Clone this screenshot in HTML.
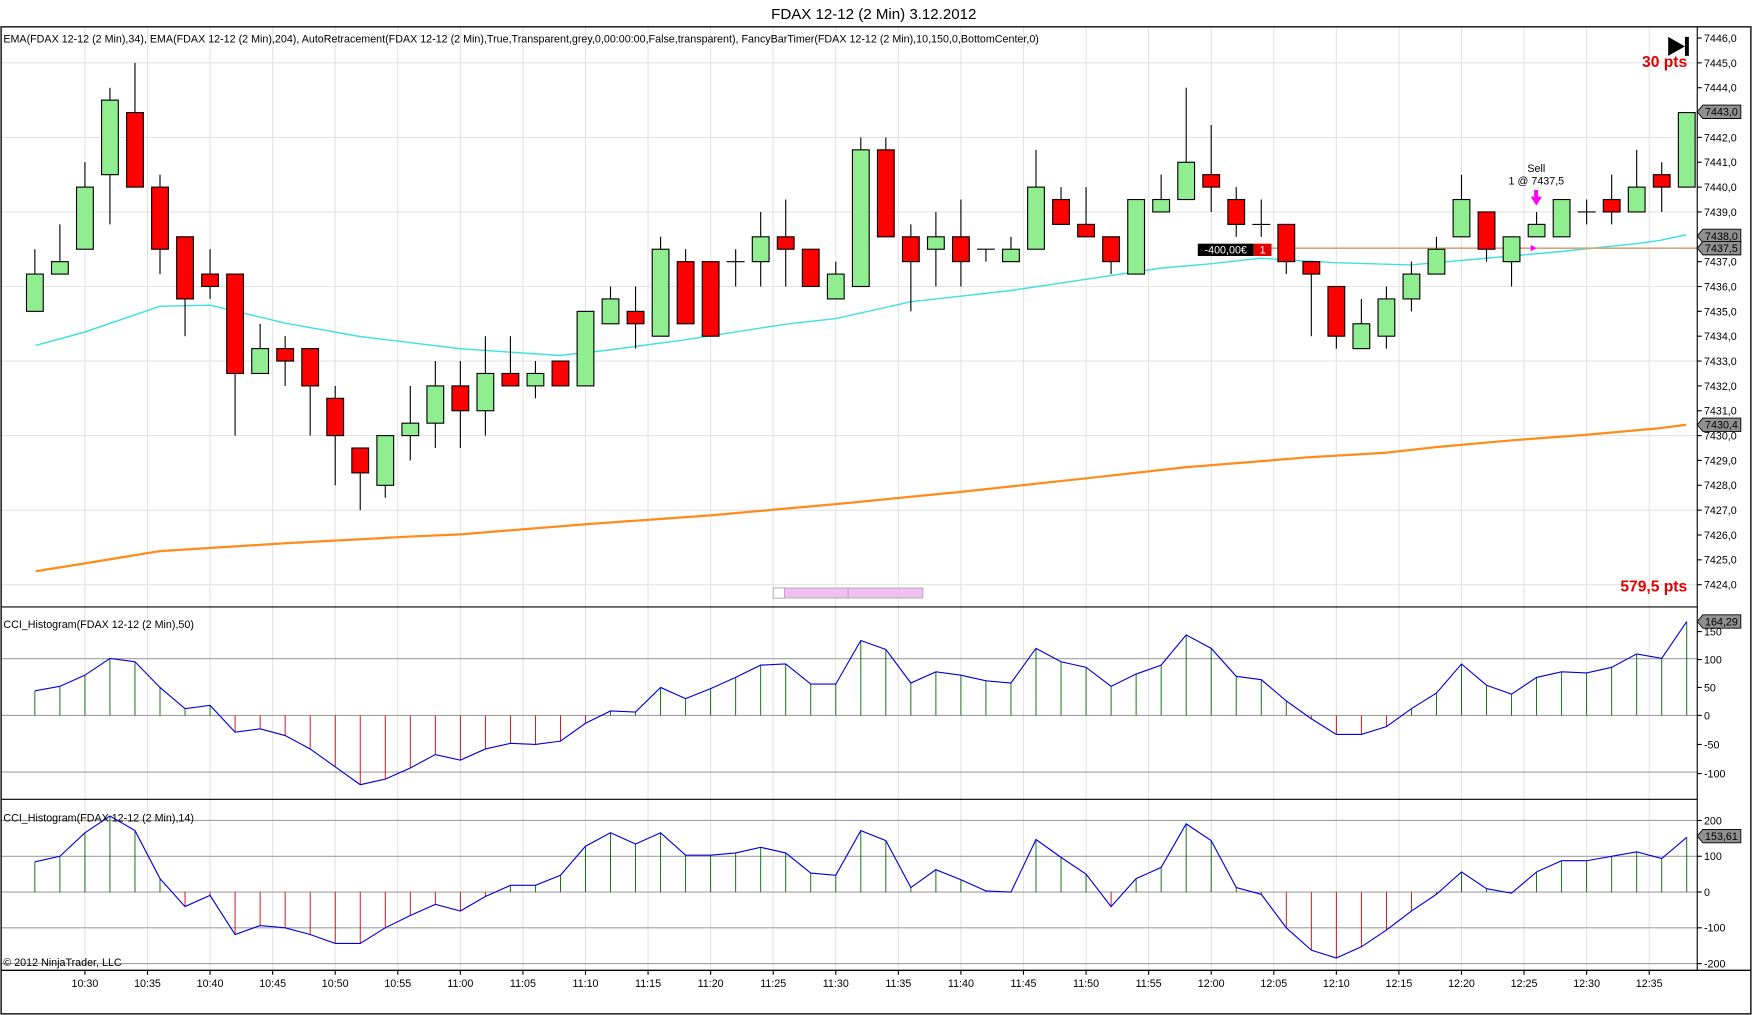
<!DOCTYPE html>
<html><head><meta charset="utf-8"><style>
html,body{margin:0;padding:0;background:#fff;}
svg{display:block;font-family:"Liberation Sans",Arial,sans-serif;}
</style></head><body>
<svg id="s" width="1752" height="1015" viewBox="0 0 1568 908" preserveAspectRatio="none" xmlns="http://www.w3.org/2000/svg">
<rect x="0" y="0" width="1568" height="908" fill="#fff"/>
<text x="782" y="17" font-size="13.5" text-anchor="middle" fill="#000">FDAX 12-12 (2 Min)  3.12.2012</text>
<g id="grid"></g>
<g id="content"></g>
<rect x="1" y="24" width="1566" height="883" fill="none" stroke="#000" stroke-width="1.2"/>
<line x1="1" y1="543" x2="1519" y2="543" stroke="#000"/>
<line x1="1" y1="715" x2="1519" y2="715" stroke="#000"/>
<line x1="1" y1="868" x2="1567" y2="868" stroke="#000" stroke-width="1.2"/>
<line x1="1519" y1="24" x2="1519" y2="868" stroke="#000"/>
<text x="3" y="38" font-size="9.6" fill="#000">EMA(FDAX 12-12 (2 Min),34), EMA(FDAX 12-12 (2 Min),204), AutoRetracement(FDAX 12-12 (2 Min),True,Transparent,grey,0,00:00:00,False,transparent), FancyBarTimer(FDAX 12-12 (2 Min),10,150,0,BottomCenter,0)</text>
<text x="3" y="562" font-size="9.6" fill="#000">CCI_Histogram(FDAX 12-12 (2 Min),50)</text>
<text x="3" y="735" font-size="9.6" fill="#000">CCI_Histogram(FDAX 12-12 (2 Min),14)</text>
<text x="3" y="864" font-size="9.6" fill="#000">© 2012 NinjaTrader, LLC</text>
<text x="1510" y="60" font-size="14" font-weight="bold" fill="#e00000" text-anchor="end">30 pts</text>
<text x="1510" y="529" font-size="14" font-weight="bold" fill="#e00000" text-anchor="end">579,5 pts</text>
<polygon points="1493,33 1493,50 1508,41.5" fill="#000"/>
<rect x="1508" y="33" width="3.5" height="17" fill="#000"/>
<rect x="692" y="526" width="134" height="9" fill="#f0c0f0" stroke="#999" stroke-width="0.6"/>
<rect x="692" y="526" width="10" height="9" fill="#fff" stroke="#999" stroke-width="0.6"/>
<line x1="759" y1="526" x2="759" y2="535" stroke="#999" stroke-width="0.6"/>
<text x="1375" y="154" font-size="9.6" text-anchor="middle">Sell</text>
<text x="1375" y="165" font-size="9.6" text-anchor="middle">1 @ 7437,5</text>
<rect x="1373" y="170" width="3.5" height="7" fill="#ff00ff"/>
<polygon points="1370,176 1380,176 1375,184" fill="#ff00ff"/>
<polygon points="1370,219 1375,222 1370,225" fill="#ff00ff"/>
<rect x="1072" y="218" width="50" height="11" fill="#000"/>
<text x="1097" y="227" font-size="9.6" fill="#fff" text-anchor="middle">-400,00€</text>
<rect x="1122" y="218" width="16" height="11" fill="#e00000"/>
<text x="1130" y="227" font-size="9.6" fill="#fff" text-anchor="middle">1</text>
<g id="axis" font-size="9.6"></g>
</svg>
<script>
var NS="http://www.w3.org/2000/svg";
function el(p,t,a,txt){var e=document.createElementNS(NS,t);for(var k in a)e.setAttribute(k,a[k]);if(txt!=null)e.textContent=txt;p.appendChild(e);return e;}
var G=document.getElementById('grid'),C=document.getElementById('content'),A=document.getElementById('axis');
function py(p){return 34+(7446-p)*22.23;}
var labels=["10:30","10:35","10:40","10:45","10:50","10:55","11:00","11:05","11:10","11:15","11:20","11:25","11:30","11:35","11:40","11:45","11:50","11:55","12:00","12:05","12:10","12:15","12:20","12:25","12:30","12:35"];
labels.forEach(function(l,i){var x=76+56*i;el(G,'line',{x1:x,y1:24,x2:x,y2:868,stroke:'#e4e4e4'});el(A,'line',{x1:x,y1:868,x2:x,y2:872,stroke:'#000'});el(A,'text',{x:x,y:883,'text-anchor':'middle'},l);});
for(var p=7424;p<=7445;p+=3)el(G,'line',{x1:1,y1:py(p),x2:1519,y2:py(p),stroke:'#e4e4e4'});
[100,0,-100].forEach(function(v){var y=640-v*0.507;el(G,'line',{x1:1,y1:y,x2:1519,y2:y,stroke:'#a0a0a0'});});
[200,100,0,-100,-200].forEach(function(v){var y=798-v*0.32;el(G,'line',{x1:1,y1:y,x2:1519,y2:y,stroke:'#a0a0a0'});});
// price axis
for(var p=7424;p<=7446;p++){var y=py(p);el(A,'line',{x1:1519,y1:y,x2:1523,y2:y,stroke:'#000'});el(A,'text',{x:1525,y:y+3.5},p+',0');}
[[150,565],[100,590],[50,615],[0,640],[-50,666],[-100,692]].forEach(function(a){el(A,'line',{x1:1519,y1:a[1],x2:1523,y2:a[1],stroke:'#000'});el(A,'text',{x:1525,y:a[1]+3.5},(a[0]<0?'-':'')+Math.abs(a[0]));});
[[200,734],[100,766],[0,798],[-100,830],[-200,862]].forEach(function(a){el(A,'line',{x1:1519,y1:a[1],x2:1523,y2:a[1],stroke:'#000'});el(A,'text',{x:1525,y:a[1]+3.5},(a[0]<0?'-':'')+Math.abs(a[0]));});
var cnd=[[7435,7436.5,7437.5,7435],[7436.5,7437,7438.5,7436.5],[7437.5,7440,7441,7437.5],[7440.5,7443.5,7444,7438.5],[7443,7440,7445,7440],[7440,7437.5,7440.5,7436.5],[7438,7435.5,7438,7434],[7436.5,7436,7437.5,7435.5],[7436.5,7432.5,7436.5,7430],[7432.5,7433.5,7434.5,7432.5],[7433.5,7433,7434,7432],[7433.5,7432,7433.5,7430],[7431.5,7430,7432,7428],[7429.5,7428.5,7429.5,7427],[7428,7430,7430,7427.5],[7430,7430.5,7432,7429],[7430.5,7432,7433,7429.5],[7432,7431,7433,7429.5],[7431,7432.5,7434,7430],[7432.5,7432,7434,7432],[7432,7432.5,7433,7431.5],[7433,7432,7433,7432],[7432,7435,7435,7432],[7434.5,7435.5,7436,7434.5],[7435,7434.5,7436,7433.5],[7434,7437.5,7438,7434],[7437,7434.5,7437.5,7434.5],[7437,7434,7437,7434],[7437,7437,7437.5,7436],[7437,7438,7439,7436],[7438,7437.5,7439.5,7436],[7437.5,7436,7437.5,7436],[7435.5,7436.5,7437,7435.5],[7436,7441.5,7442,7436],[7441.5,7438,7442,7438],[7438,7437,7438.5,7435],[7437.5,7438,7439,7436],[7438,7437,7439.5,7436],[7437.5,7437.5,7437.5,7437],[7437,7437.5,7438,7437],[7437.5,7440,7441.5,7437.5],[7439.5,7438.5,7440,7438.5],[7438.5,7438,7440,7438],[7438,7437,7438,7436.5],[7436.5,7439.5,7439.5,7436.5],[7439,7439.5,7440.5,7439],[7439.5,7441,7444,7439.5],[7440.5,7440,7442.5,7439],[7439.5,7438.5,7440,7438],[7438.5,7438.5,7439.5,7438],[7438.5,7437,7438.5,7436.5],[7437,7436.5,7437,7434],[7436,7434,7436,7433.5],[7433.5,7434.5,7435.5,7433.5],[7434,7435.5,7436,7433.5],[7435.5,7436.5,7437,7435],[7436.5,7437.5,7438,7436.5],[7438,7439.5,7440.5,7438],[7439,7437.5,7439,7437],[7437,7438,7438,7436],[7438,7438.5,7439,7438],[7438,7439.5,7439.5,7438],[7439,7439,7439.5,7438.5],[7439.5,7439,7440.5,7438.5],[7439,7440,7441.5,7439],[7440.5,7440,7441,7439],[7440,7443,7443,7440]];
function bx(i){return 31.2+22.4*i;}
// EMA lines
el(C,'polyline',{points:"32,309 76,297 143,274 188,273 255,289 322,301 412,312 501,318 546,313 613,304 703,290 748,285 815,270 904,260 971,250 1038,240 1083,236 1128,231 1195,235 1262,237 1330,231 1397,225 1464,218 1486,215 1509,210",fill:'none',stroke:'#40e0e0','stroke-width':1.3});
el(C,'polyline',{points:"32,511 76,504 143,493 255,486 367,480 412,478 524,469 636,461 748,451 860,440 971,428 1061,418 1172,409 1240,405 1285,400 1352,394 1419,389 1486,383 1509,380",fill:'none',stroke:'#ff8c1a','stroke-width':2});
el(C,'line',{x1:1138,y1:222,x2:1519,y2:222,stroke:'#d2a679','stroke-width':1.5});
cnd.forEach(function(c,i){var x=bx(i),o=c[0],cl=c[1],h=c[2],l=c[3];
el(C,'line',{x1:x,y1:py(h),x2:x,y2:py(l),stroke:'#000'});
if(o==cl){el(C,'line',{x1:x-8,y1:py(o),x2:x+8,y2:py(o),stroke:'#000'});}
else{var t=Math.max(o,cl),b=Math.min(o,cl);el(C,'rect',{x:x-7.5,y:py(t),width:15,height:py(b)-py(t),fill:cl>o?'#90ee90':'#ff0000',stroke:'#000','stroke-width':1});}});
function hist(v,zero){var pts=[];v.forEach(function(y,i){var x=bx(i);pts.push(x+','+y);el(C,'line',{x1:x,y1:zero,x2:x,y2:y,stroke:y>zero?'#cc0000':'#006400','stroke-width':0.8});});el(C,'polyline',{points:pts.join(' '),fill:'none',stroke:'#0000dd','stroke-width':1});}
hist([618,614,604,589,592,615,634,631,655,652,658,670,686,702,697,687,675,680,670,665,666,663,647,636,637,615,625,616,606,595,594,612,612,573,581,611,601,604,609,611,580,592,597,614,603,595,568,580,605,608,627,643,657,657,650,634,620,594,613,621,606,601,602,597,585,589,556],640);
hist([771,766,745,730,743,786,811,801,836,828,830,836,844,844,830,819,809,815,802,792,792,783,757,745,755,745,765,765,763,758,763,781,783,743,752,794,778,787,797,798,751,767,782,811,786,776,737,752,794,800,830,850,857,847,832,815,800,780,795,799,780,770,770,766,762,768,749],798);
function tag(y,t){el(A,'polygon',{points:'1519,'+y+' 1524,'+(y-6)+' 1558,'+(y-6)+' 1558,'+(y+6)+' 1524,'+(y+6),fill:'#909090',stroke:'#000','stroke-width':0.8});el(A,'text',{x:1526,y:y+3.5,fill:'#000'},t);}
tag(100,'7443,0');tag(211,'7438,0');tag(222,'7437,5');tag(380,'7430,4');tag(556,'164,29');tag(748,'153,61');
</script>
</body></html>
